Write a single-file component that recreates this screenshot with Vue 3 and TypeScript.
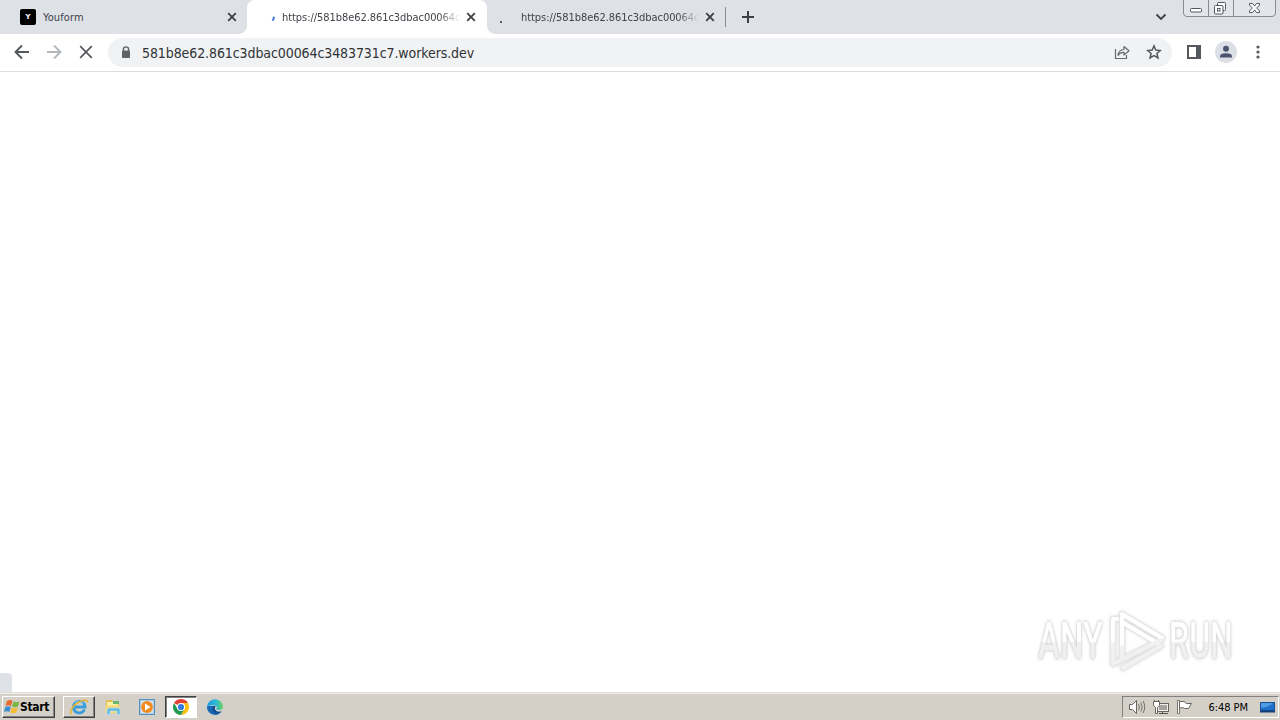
<script setup lang="ts">
interface Tab {
  title: string
  kind: 'site' | 'loading' | 'waiting'
  active: boolean
}

const host = '581b8e62.861c3dbac00064c3483731c7.workers.dev'
const shortAddress = `https://${host.slice(0, 24)}`

const tabs: Tab[] = [
  { title: 'Youform', kind: 'site', active: false },
  { title: shortAddress, kind: 'loading', active: true },
  { title: shortAddress, kind: 'waiting', active: false },
]
</script>

<template>
  <div class="screen">
    <header class="tabstrip">
      <div v-for="(tab, i) in tabs" :key="i" class="tab" :class="[tab.kind, { active: tab.active }]">
        <span v-if="tab.kind === 'site'" class="favicon">Y</span>
        <svg v-else class="spinner" width="16" height="16" viewBox="0 0 16 16">
          <path v-if="tab.kind === 'loading'" d="M15 7.800Q15 10 13.400 11.600" fill="none" stroke="#3b78d8" stroke-width="2" />
          <rect v-else x="7" y="11" width="2" height="2" fill="#55606c" />
        </svg>
        <span class="title">{{ tab.title }}</span>
        <svg class="close" width="10" height="10" viewBox="0 0 10 10">
          <path d="M1.200 1.200 8.800 8.800M8.800 1.200 1.200 8.800" stroke="#3c4043" stroke-width="1.800" />
        </svg>
      </div>
      <i class="divider"></i>
      <svg class="plus" width="14" height="14" viewBox="0 0 14 14">
        <path d="M7 1v12M1 7h12" stroke="#3c4043" stroke-width="2" />
      </svg>
      <svg class="chevron" width="12" height="8" viewBox="0 0 12 8">
        <path d="m1.500 1.500 4.500 4.400 4.500-4.400" fill="none" stroke="#3c4043" stroke-width="1.800" />
      </svg>
      <svg class="controls" width="94" height="18" viewBox="0 0 94 18">
        <path d="M.5 0v13q0 3.500 3.500 3.500h85q3.500 0 3.500-3.500V0M25.500 0v16M50.500 0v16" fill="#e2e5ea" stroke="#878b94" />
        <rect x="7.500" y="8.500" width="11" height="3.500" rx="1" fill="#fff" stroke="#51555f" />
        <rect x="34.500" y="2.500" width="8" height="8" rx="1" fill="#fff" stroke="#51555f" />
        <rect x="31.500" y="5.500" width="8.500" height="8.500" rx="1" fill="#fff" stroke="#51555f" />
        <rect x="34.500" y="8.500" width="2.500" height="2.500" fill="#fff" stroke="#51555f" />
        <path d="M66.500 3.500h3l2 2.500 2-2.500h3v1.500l-2.800 3 2.800 3v1.500h-3l-2-2.500-2 2.500h-3V11l2.800-3-2.800-3z" fill="#fff" stroke="#51555f" stroke-width="1" />
      </svg>
    </header>

    <nav class="toolbar">
      <svg class="nav-icon" width="16" height="16" viewBox="0 0 16 16">
        <path d="M15 8H2M8 1.500 1.500 8 8 14.500" fill="none" stroke="#55585c" stroke-width="1.900" />
      </svg>
      <svg class="nav-icon" width="16" height="16" viewBox="0 0 16 16">
        <path d="M1 8h13M8 1.500 14.500 8 8 14.500" fill="none" stroke="#b4b7ba" stroke-width="1.900" />
      </svg>
      <svg class="nav-icon" width="16" height="16" viewBox="0 0 16 16">
        <path d="m2.200 2.200 11.600 11.600M13.800 2.200 2.200 13.800" stroke="#55585c" stroke-width="1.700" />
      </svg>
      <div class="omnibox">
        <svg class="lock" width="10" height="13" viewBox="0 0 10 13">
          <path d="M2.400 5V3.500a2.600 2.600 0 0 1 5.200 0V5" fill="none" stroke="#5f6368" stroke-width="1.400" />
          <rect x="1" y="4.500" width="8" height="7.500" rx=".8" fill="#5f6368" />
        </svg>
        <span class="url">{{ host }}</span>
        <svg class="share" width="16" height="16" viewBox="0 0 16 16">
          <path d="M1.500 5v9.500h11V11" fill="none" stroke="#666b71" stroke-width="1.200" />
          <path d="M4 11.500c.4-4 2.400-5.900 6-6V2.500l5 4.300-5 4.200V8.300c-2.700 0-4.700 1-6 3.200z" fill="none" stroke="#666b71" stroke-width="1.200" stroke-linejoin="round" />
        </svg>
        <svg class="star" width="16" height="16" viewBox="0 0 16 16">
          <path d="m8 1.900 1.800 4.200 4.600.4-3.500 3 1.100 4.500L8 11.600 4 14l1.100-4.500-3.500-3 4.600-.4z" fill="none" stroke="#55595e" stroke-width="1.500" stroke-linejoin="miter" />
        </svg>
      </div>
      <svg class="panel" width="14" height="14" viewBox="0 0 14 14">
        <rect x="1" y="1" width="12" height="12" fill="#fff" stroke="#55585c" stroke-width="2" />
        <path d="M9 1h4v12H9z" fill="#55585c" />
      </svg>
      <svg class="profile" width="22" height="22" viewBox="0 0 22 22">
        <circle cx="11" cy="11" r="11" fill="#dcdfe5" />
        <circle cx="11" cy="7.700" r="3" fill="#4c5470" />
        <path d="M5 16.500v-1.300q0-3 6-3t6 3v1.300z" fill="#4c5470" />
      </svg>
      <svg class="menu" width="4" height="14" viewBox="0 0 4 14">
        <g fill="#55585c"><circle cx="2" cy="2" r="1.600" /><circle cx="2" cy="7" r="1.600" /><circle cx="2" cy="12" r="1.600" /></g>
      </svg>
    </nav>

    <main class="page">
      <i class="status"></i>
      <div class="watermark">
        <span class="word any">ANY</span>
        <svg class="play" width="62" height="66" viewBox="0 0 62 66">
          <g fill="none" stroke-linejoin="round" stroke-linecap="round">
            <g stroke="#e6e6e6" stroke-width="6">
              <path d="M14 51V6l40 24-5 5-35-21" />
              <path d="M9 11H5v45l8-4 40-20M15 60l38-22" />
            </g>
            <g stroke="#fff" stroke-width="4">
              <path d="M14 37V6l40 24-5 5-35-21" />
              <path d="M9 11H5v22" />
            </g>
            <g stroke="#f1f1f1" stroke-width="4">
              <path d="M5 36v20l8-4 40-20M14 39v12M15 60l38-22" />
            </g>
          </g>
        </svg>
        <span class="word run">RUN</span>
      </div>
    </main>

    <footer class="taskbar">
      <button class="start">
        <svg width="17" height="16" viewBox="0 0 17 16">
          <path d="M3 2q3-2 5.500 0L7 7Q4.500 5.500 1.500 7z" fill="#e8682c" />
          <path d="M9.500 2.500q3 1.500 6 0L14 7.500q-3 1.500-6 0z" fill="#75b843" />
          <path d="M1.300 8q3-1.500 5.500 0l-1.500 5Q3 11.500 0 13z" fill="#3d8ed0" />
          <path d="M7.800 8.500q3 1.500 6 0l-1.500 5q-3 1.500-6 0z" fill="#f6bd32" />
        </svg>
        <span>Start</span>
      </button>
      <div class="task raised">
        <svg width="20" height="18" viewBox="0 0 20 18">
          <path d="M15.500 11.500A5.800 5.800 0 1 1 16 9H5" fill="none" stroke="#3a9ddb" stroke-width="2.800" />
          <path d="M6 5q4-3 8 .5" fill="none" stroke="#7ed0f4" stroke-width="1.200" />
          <path d="M3 16C-.5 15 3 8 9 4.500s10-3.500 9 0" fill="none" stroke="#e7b52e" stroke-width="1.500" />
        </svg>
      </div>
      <div class="task">
        <svg width="18" height="18" viewBox="0 0 18 18">
          <path d="M2 2h6l1 2h6v10H2z" fill="#e5bd55" />
          <path d="M3 4h9l2 3v6H3z" fill="#fff0a9" />
          <path d="M9 3h6v3H9z" fill="#69b76f" />
          <path d="M1.500 7.500h14V15h-14z" fill="#f3d675" />
          <path d="M3 16.500V12q0-2 2-2h9q2 0 2 2v4.500h-3V13H6v3.500z" fill="#62b8df" stroke="#b9e5f6" stroke-width=".7" />
        </svg>
      </div>
      <div class="task">
        <svg width="17" height="17" viewBox="0 0 17 17">
          <rect x=".5" y=".5" width="15" height="15" fill="#aecde5" stroke="#5191bf" />
          <rect x="2" y="2" width="12" height="12" fill="#d5e3ec" />
          <circle cx="8" cy="8" r="5.900" fill="#f28b1d" />
          <path d="m6 4.500 5.500 3.500L6 11.500z" fill="#fff" />
        </svg>
      </div>
      <div class="task pressed">
        <svg width="16" height="16" viewBox="0 0 16 16">
          <path d="M8 8 1.070 4A8 8 0 0 1 14.930 4z" fill="#e34133" />
          <path d="M8 4h6.930A8 8 0 0 1 8 16l3.460-6z" fill="#fbc116" />
          <path d="M1.070 4 4.540 10 8 12l3.460-2L8 16A8 8 0 0 1 1.070 4z" fill="#229b50" />
          <circle cx="8" cy="8" r="4" fill="#fff" /><circle cx="8" cy="8" r="3.100" fill="#347de0" />
        </svg>
      </div>
      <div class="task">
        <svg width="18" height="18" viewBox="0 0 18 18">
          <defs>
            <linearGradient id="edge-top" x1="0" x2="1"><stop offset="0" stop-color="#1f98e0" /><stop offset=".55" stop-color="#2bb9d6" /><stop offset="1" stop-color="#68d45b" /></linearGradient>
          </defs>
          <path d="M1 8a8 8 0 0 0 8 9q4.500 0 6.600-3.700-4.600 1.500-6.600-1.800-.7-2 .6-3.500z" fill="#1768b5" />
          <path d="M1 9.500a8 8 0 0 1 16-.7q0 3.200-4 3.200-3 0-2.500-1.500Q11.500 8 9 7.500 3 6.500 1 9.500z" fill="url(#edge-top)" />
          <path d="M6.500 9q-1.500 4.500 3 6.500 3 .7 6-2-4.500 1.300-6.500-1.800Q8.200 10 9.500 8q-2-.5-3 1z" fill="#124d91" />
        </svg>
      </div>

      <div class="tray">
        <svg width="18" height="16" viewBox="0 0 18 16">
          <path d="M1.500 5.500h3l4-4v13l-4-4h-3z" fill="#fff" stroke="#66655f" />
          <path d="M10.500 5q2 3 0 6M12.800 3.500q3 4.500 0 9M15 2q3.500 6 0 12" fill="none" stroke="#74726c" />
        </svg>
        <svg class="network" width="18" height="17" viewBox="0 0 18 17">
          <rect x="5.500" y="4.500" width="11" height="8" fill="#f1f0ec" stroke="#66655f" />
          <rect x="7" y="6" width="8" height="5" fill="#a5a39c" />
          <path d="M10.500 13v2M7 14.500h9" stroke="#55544f" />
          <path d="M1.500 2.500h6v4l-2 2v6h-2v-6l-2-2zM2.500 1v2M6.500 1v2" fill="#fff" stroke="#66655f" />
        </svg>
        <svg class="flag" width="17" height="16" viewBox="0 0 17 16">
          <path d="M1.500 1.500h2v13h-2z" fill="#fff" stroke="#77756f" />
          <path d="M3.500 2.500h5q1 2 2 2h5l-3 5h-4q-1-1.500-5-.5z" fill="#fff" stroke="#66655f" />
        </svg>
        <span class="clock">6:48 PM</span>
        <svg class="desktop" width="17" height="15" viewBox="0 0 17 15">
          <path d="M1.500 2.500h14v8h-14z" fill="#1e6fc9" stroke="#174d91" />
          <path d="M2 3h12Q10 7 2 8z" fill="#4e9ce4" />
          <path d="M1 10.500h15v2H1z" fill="#143f79" />
        </svg>
      </div>
    </footer>
  </div>
</template>

<style>
body { margin: 0; overflow: hidden; }
</style>

<style scoped>
.screen {
  width: 1280px;
  height: 720px;
  display: flex;
  flex-direction: column;
  overflow: hidden;
  background: #fff;
  font-family: "DejaVu Sans Condensed", "DejaVu Sans", sans-serif;
  font-stretch: condensed;
  color: #3f4348;
}
svg { display: block; flex: none; }
.tabstrip { height: 34px; display: flex; flex: none; background: #dee1e6; }
.tab {
  position: relative;
  box-sizing: border-box;
  width: 240px;
  height: 34px;
  padding: 0 11px 0 17px;
  display: flex;
  align-items: center;
}
.tab.site { width: 247px; padding: 0 10px 0 20px; }
.tab.waiting { width: 238px; padding: 0 10px 0 6px; }
.tab.active { background: #fff; border-radius: 8px 8px 0 0; }
.tab.active::before, .tab.active::after {
  content: "";
  position: absolute;
  bottom: 0;
  width: 8px;
  height: 8px;
}
.tab.active::before { left: -8px; background: radial-gradient(circle at 0 0, transparent 7.500px, #fff 8px); }
.tab.active::after { right: -8px; background: radial-gradient(circle at 100% 0, transparent 7.500px, #fff 8px); }
.favicon {
  width: 16px;
  height: 16px;
  border-radius: 2px;
  background: #000;
  color: #fff;
  font: bold 7px/16px "DejaVu Sans", sans-serif;
  text-align: center;
}
.loading .spinner { margin-right: 7px; margin-left: -5px; }
.waiting .spinner { margin-right: 12px; margin-top: 2px; }
.title {
  width: 178px;
  overflow: hidden;
  white-space: nowrap;
  font-size: 11px;
  line-height: 16px;
  padding-top: 1px;
  letter-spacing: -.06px;
}
.site .title { margin-left: 7px; letter-spacing: .1px; }
.loading .title, .waiting .title {
  -webkit-mask-image: linear-gradient(90deg, #000 157px, transparent 178px);
  mask-image: linear-gradient(90deg, #000 157px, transparent 178px);
}
.close { margin-left: auto; }
.divider { width: 1px; height: 20px; margin: 7px 0 0; background: #888d95; }
.plus { margin: 10px 0 0 15px; }
.chevron { margin: 13px 16px 0 auto; }
.controls { margin-right: 3px; }
.toolbar {
  height: 38px;
  box-sizing: border-box;
  flex: none;
  display: flex;
  align-items: center;
  padding: 0 20px 1px 14px;
  border-bottom: 1px solid #dcdddf;
}
.nav-icon { margin-right: 16px; }
.omnibox {
  width: 1064px;
  height: 29px;
  box-sizing: border-box;
  margin-left: -2px;
  padding: 0 10px 0 13px;
  display: flex;
  align-items: center;
  background: #f0f2f4;
  border-radius: 15px;
}
.lock { margin-right: 11px; }
.url { font-size: 14px; line-height: 20px; letter-spacing: -.09px; padding-top: 1px; color: #303236; }
.share { margin-left: auto; margin-right: 16px; }
.panel { margin-left: 15px; }
.profile { margin-left: 14px; }
.menu { margin-left: auto; }
.page { flex: 1; min-height: 0; position: relative; border-bottom: 1px solid #e0ddd6; }
.status {
  position: absolute;
  left: 0;
  bottom: 0;
  width: 12px;
  height: 19px;
  background: #dee1e6;
  border-radius: 0 4px 0 0;
}
.watermark {
  position: absolute;
  left: 1038px;
  top: 536px;
  width: 196px;
  height: 66px;
  display: flex;
  align-items: center;
}
.word {
  display: block;
  width: 100px;
  font: 500 50px/66px Roboto, sans-serif;
  transform-origin: 0 50%;
  background: linear-gradient(#fff 51%, #f0f0f0 52%);
  -webkit-background-clip: text;
  background-clip: text;
  color: transparent;
  filter: drop-shadow(0 0 1.500px #c8c8c8) drop-shadow(0 0 2px #e0e0e0);
}
.any { transform: scaleX(.66); margin-right: -30px; }
.run { transform: scaleX(.64); margin-right: -38px; margin-left: -1px; }
.play { filter: drop-shadow(0 0 1.500px #d4d4d4); }
.taskbar {
  height: 27px;
  flex: none;
  box-sizing: border-box;
  display: flex;
  align-items: center;
  padding: 0 1px 0 2px;
  background: #d4d0c8;
  border-top: 1px solid #f1efeb;
}
.start {
  width: 53px;
  height: 22px;
  padding: 0 0 0 1px;
  box-sizing: border-box;
  display: flex;
  align-items: center;
  background: #d4d0c8;
  border: 1px solid;
  border-color: #fff #404040 #404040 #fff;
  box-shadow: inset -1px -1px #808080;
  font: bold 12px "DejaVu Sans Condensed", "DejaVu Sans", sans-serif;
  font-stretch: condensed;
  letter-spacing: -.35px;
  color: #000;
}
.start span { margin-left: -1px; }
.task {
  width: 32px;
  height: 22px;
  box-sizing: border-box;
  margin-right: 2px;
  display: flex;
  align-items: center;
  justify-content: center;
}
.start + .task { margin-left: 8px; }
.raised { border: 1px solid; border-color: #fff #404040 #404040 #fff; box-shadow: inset -1px -1px #808080; }
.pressed { background: #fff; border: 1px solid; border-color: #404040 #fff #fff #404040; box-shadow: inset 1px 1px #808080; }
.tray {
  width: 157px;
  height: 22px;
  box-sizing: border-box;
  margin-left: auto;
  padding: 0 2px 0 5px;
  display: flex;
  align-items: center;
  border: 1px solid;
  border-color: #808080 #fff #fff #808080;
}
.network { margin-left: 6px; }
.flag { margin-left: 6px; }
.clock { margin-left: auto; font-size: 11px; letter-spacing: -.05px; color: #000; }
.desktop { margin-left: 11px; }
</style>
